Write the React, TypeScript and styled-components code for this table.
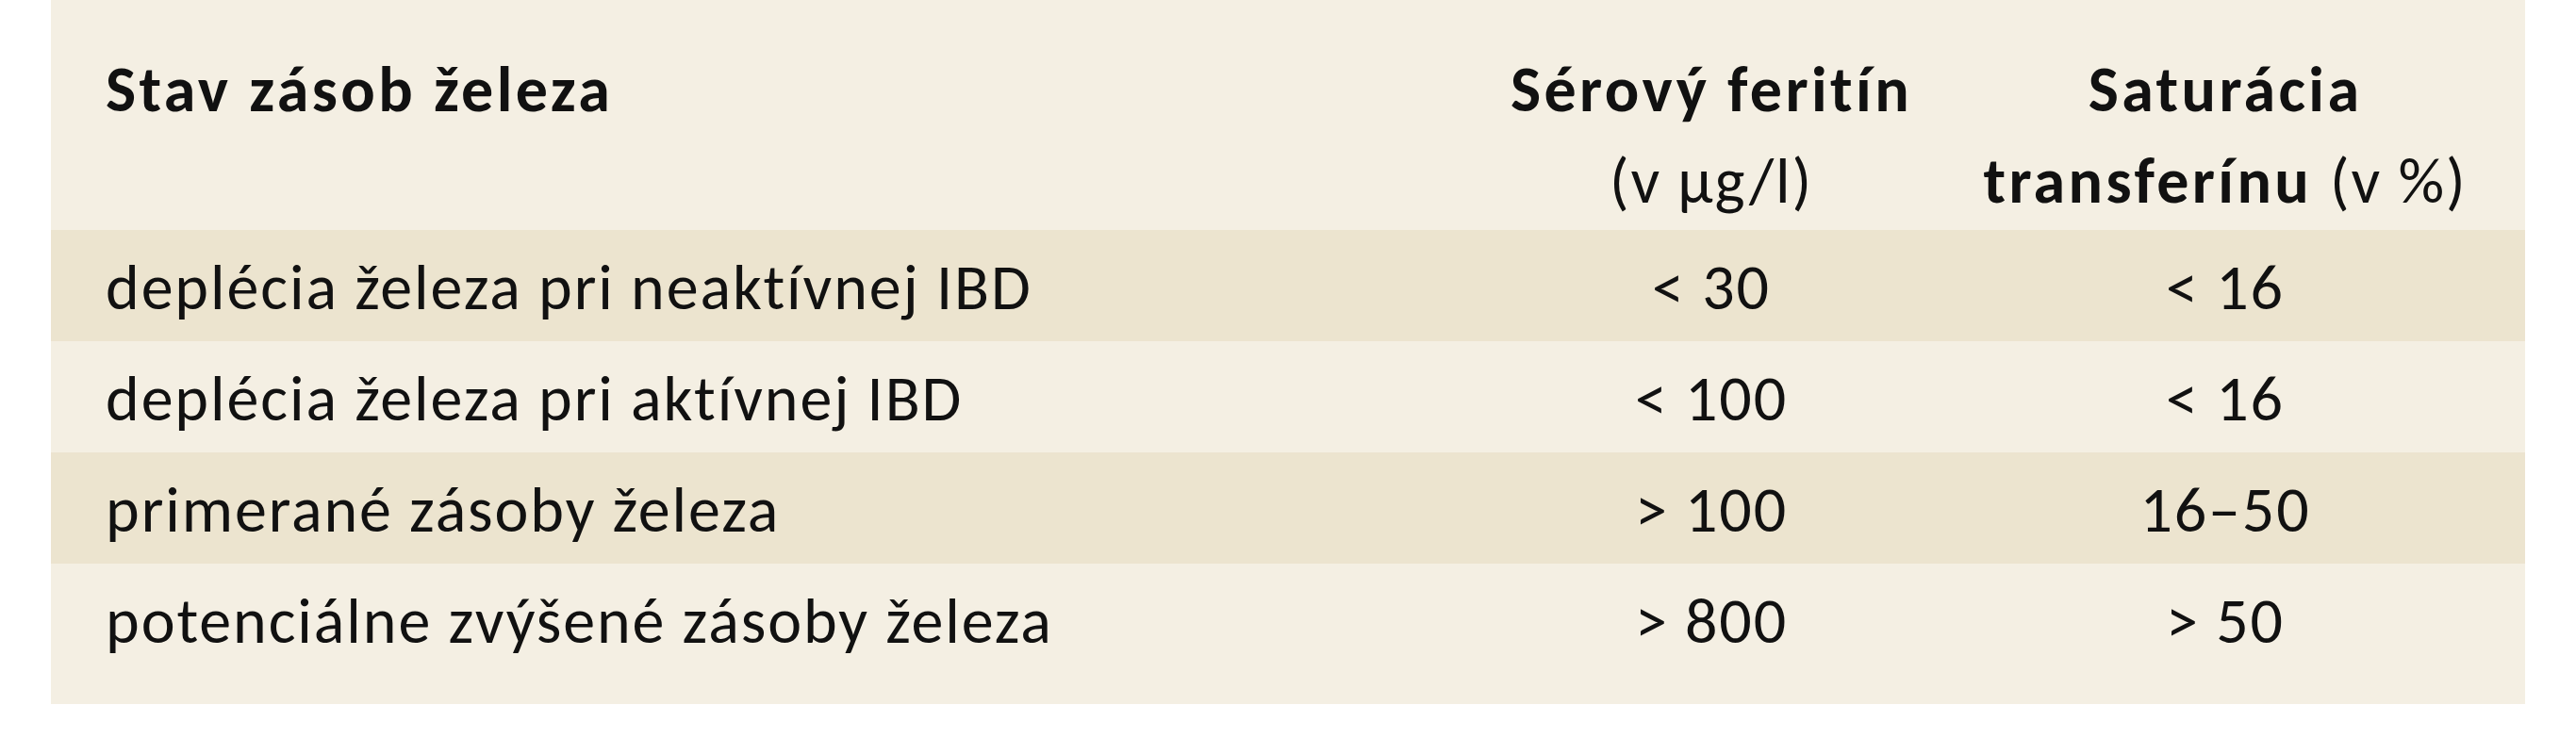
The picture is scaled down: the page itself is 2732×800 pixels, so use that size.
import React from "react";
import styled, { createGlobalStyle } from "styled-components";

const GlobalStyle = createGlobalStyle`
  html, body {
    margin: 0;
    padding: 0;
    background: #ffffff;
  }
  body {
    font-family: Carlito, Lato, "Liberation Sans", sans-serif;
    color: #111111;
  }
`;

const Page = styled.div`
  padding-left: 54px;
`;

const Table = styled.div`
  width: 2624px;
  display: grid;
  grid-template-columns: 1534px 454px 636px;
  background: #f4efe3;
`;

const Row = styled.div<{ $shaded?: boolean; $last?: boolean }>`
  display: contents;

  & > div {
    background: ${(p) => (p.$shaded ? "#ece4cf" : "#f4efe3")};
    padding-bottom: ${(p) => (p.$last ? "31px" : "0")};
  }
`;

const HeadCell = styled.div<{ $align?: "left" | "center" }>`
  height: 244px;
  box-sizing: border-box;
  padding: 46px 0 0 ${(p) => (p.$align === "left" ? "58px" : "0")};
  font-size: 68px;
  font-weight: 700;
  line-height: 97px;
  letter-spacing: 3.4px;
  text-align: ${(p) => p.$align ?? "center"};
  white-space: nowrap;
`;

const Label = styled.span`
  font-weight: 400;
  letter-spacing: 1.9px;
`;

const Cell = styled.div<{ $align?: "left" | "center" }>`
  padding: 4px 0 0 ${(p) => (p.$align === "left" ? "58px" : "0")};
  font-size: 68px;
  line-height: 114px;
  letter-spacing: 1.9px;
  text-align: ${(p) => p.$align ?? "center"};
  white-space: nowrap;
`;

const rows = [
  { state: "deplécia železa pri neaktívnej IBD", ferritin: "< 30", saturation: "< 16" },
  { state: "deplécia železa pri aktívnej IBD", ferritin: "< 100", saturation: "< 16" },
  { state: "primerané zásoby železa", ferritin: "> 100", saturation: "16–50" },
  { state: "potenciálne zvýšené zásoby železa", ferritin: "> 800", saturation: "> 50" },
];

export default function App() {
  return (
    <Page>
      <GlobalStyle />
      <Table>
        <Row>
          <HeadCell $align="left">Stav zásob železa</HeadCell>
          <HeadCell>
            Sérový feritín
            <br />
            <Label>(v µg/l)</Label>
          </HeadCell>
          <HeadCell>
            Saturácia
            <br />
            transferínu <Label>(v %)</Label>
          </HeadCell>
        </Row>
        {rows.map((r, i) => (
          <Row key={r.state} $shaded={i % 2 === 0} $last={i === rows.length - 1}>
            <Cell $align="left">{r.state}</Cell>
            <Cell>{r.ferritin}</Cell>
            <Cell>{r.saturation}</Cell>
          </Row>
        ))}
      </Table>
    </Page>
  );
}
